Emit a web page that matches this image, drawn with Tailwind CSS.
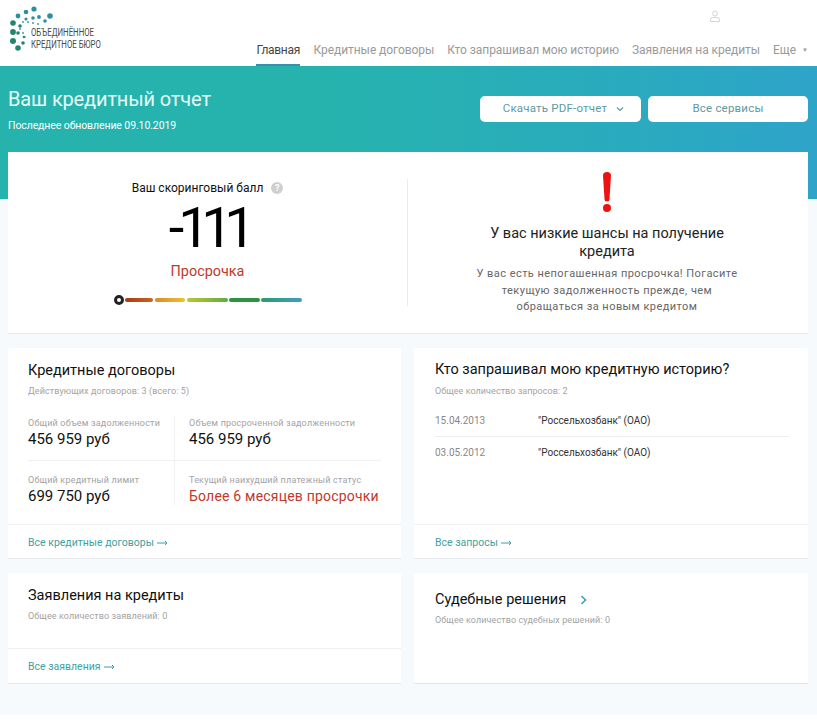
<!DOCTYPE html>
<html lang="ru">
  <head>
    <meta charset="UTF-8" />
    <title>Кредитный отчет</title>
    <script src="https://cdn.jsdelivr.net/npm/@tailwindcss/browser@4"></script>
  </head>
  <body class="bg-white font-['Roboto',sans-serif] text-[#111]">
    <div class="w-[817px] h-[715px] bg-[#f6fafc] overflow-hidden">
      <!-- Header -->
      <header class="h-[66px] bg-white flex justify-between pl-[8px] pr-[9px]">
        <div class="flex items-start pt-[6px]">
          <svg width="48" height="46" viewBox="8 6 48 46" class="shrink-0">
            <g fill="#2f8f9f">
              <circle cx="34" cy="9" r="2.6" /><circle cx="26" cy="12" r="2.3" /><circle cx="50" cy="16" r="2.8" />
              <circle cx="18" cy="16" r="2.4" /><circle cx="33" cy="18" r="1.8" /><circle cx="26" cy="19" r="1.6" />
              <circle cx="39" cy="17" r="1.9" /><circle cx="45" cy="21" r="1.8" />
            </g>
            <g fill="#23856f">
              <circle cx="13" cy="23" r="2.8" /><circle cx="13" cy="32" r="2.9" /><circle cx="13" cy="41" r="3" />
              <circle cx="18" cy="48" r="2.8" /><circle cx="20" cy="26" r="1.8" /><circle cx="18" cy="33" r="1.8" />
              <circle cx="23" cy="43" r="1.8" /><circle cx="24" cy="37" r="1.3" />
            </g>
            <g fill="#3aa39a">
              <circle cx="23" cy="22" r="1" /><circle cx="28" cy="22" r="1" /><circle cx="33" cy="23" r="1" />
              <circle cx="38" cy="24" r="1" /><circle cx="20" cy="29" r="1" /><circle cx="23" cy="33" r="1" />
              <circle cx="25" cy="37" r="0.8" />
            </g>
          </svg>
          <div class="-ml-[25px] mt-[21px] text-[10px] leading-[11.5px] text-[#4a4a4a] origin-left scale-x-[0.78] whitespace-nowrap">
            <div>ОБЪЕДИНЁННОЕ</div>
            <div>КРЕДИТНОЕ БЮРО</div>
          </div>
        </div>
        <div class="flex flex-col items-end">
          <svg width="12" height="12" viewBox="0 0 12 12" fill="none" stroke="#d4d4d4" class="mt-[10px] mr-[87px]">
            <circle cx="6" cy="3.5" r="2.5" /><path d="M1.5 11.5v-2q0-2 2-2h5q2 0 2 2v2z" />
          </svg>
          <nav class="flex gap-[13px] text-[12px] tracking-[-0.05px] text-[#9a9a9a] mt-[11px] h-[33px]">
            <a class="h-full pt-[8px] w-[44px] whitespace-nowrap tracking-[-0.3px] text-[#444] border-b-2 border-[#3a8fb0]">Главная</a>
            <a class="pt-[8px]">Кредитные договоры</a>
            <a class="pt-[8px]">Кто запрашивал мою историю</a>
            <a class="pt-[8px]">Заявления на кредиты</a>
            <a class="pt-[8px] flex items-start gap-[6px]">Еще <span class="text-[6px] mt-[4px]">▼</span></a>
          </nav>
        </div>
      </header>

      <!-- Report banner -->
      <section class="h-[133px] bg-gradient-to-r from-[#26b3ad] from-40% to-[#2ea4c9] flex justify-between px-[8px] pt-[23px]">
        <div>
          <h1 class="text-[20px] leading-[20px] text-[#e4fbf8] tracking-[-0.15px]">Ваш кредитный отчет</h1>
          <p class="text-[10.5px] leading-[14px] text-white mt-[10px] tracking-[-0.1px]">Последнее обновление 09.10.2019</p>
        </div>
        <div class="flex gap-[7px] pr-[1px] pt-[7px] text-[11.5px] tracking-[0.2px] text-[#5f9aa1]">
          <button class="w-[161px] h-[26px] pl-[6px] bg-white rounded-[5px] flex items-center justify-center gap-[9px]">
            Скачать PDF-отчет
            <svg width="8" height="6" viewBox="0 0 8 6" fill="none" stroke="#5f9aa1" stroke-width="1.2"><path d="M1 1.5l3 3 3-3" /></svg>
          </button>
          <button class="w-[160px] h-[26px] bg-white rounded-[5px]">Все сервисы</button>
        </div>
      </section>

      <main class="px-[8px] pr-[9px]">
        <!-- Score card -->
        <section class="-mt-[47px] relative h-[182px] bg-white border-b border-[#e6eaec] flex">
          <div class="w-[399px] pt-[29px] flex flex-col items-center">
            <div class="flex items-center gap-[8px] text-[12px] leading-[14px]">
              Ваш скоринговый балл
              <span class="w-[12px] h-[12px] rounded-full bg-[#cfcfcf] text-white text-[9px] font-bold leading-[12px] text-center">?</span>
            </div>
            <div class="text-[56px] leading-[50px] mt-[8px] tracking-[-8.5px] ml-[1px] text-black"><span class="tracking-[-6px]">-</span>111</div>
            <div class="text-[14.4px] leading-[18px] text-[#c0392b] mt-[10px]">Просрочка</div>
            <div class="flex items-center mt-[14px]">
              <span class="w-[10px] h-[10px] rounded-full bg-white border-[3px] border-[#222] mr-[1px]"></span>
              <span class="w-[28px] h-[4px] rounded-full bg-gradient-to-r from-[#a83c12] to-[#c9641f] mr-[2px]"></span>
              <span class="w-[30px] h-[4px] rounded-full bg-gradient-to-r from-[#d98a2b] to-[#ecc22f] mr-[2px]"></span>
              <span class="w-[41px] h-[4px] rounded-full bg-gradient-to-r from-[#b9c832] to-[#5cab3e] mr-[1px]"></span>
              <span class="w-[31px] h-[4px] rounded-full bg-[#2f9440] mr-[1px]"></span>
              <span class="w-[41px] h-[4px] rounded-full bg-gradient-to-r from-[#2f9a66] to-[#3f9fc4]"></span>
            </div>
          </div>
          <div class="w-px h-[127px] mt-[27px] bg-[#e9ecee]"></div>
          <div class="flex-1 flex flex-col items-center text-center pt-[20px] pr-[2px]">
            <svg width="10" height="42" viewBox="0 0 10 42">
              <path d="M1 3.5a4 3.5 0 0 1 8 0L7.5 27a2.5 2.5 0 0 1-5 0z" fill="#ee1111" />
              <circle cx="5" cy="36" r="4" fill="#ee1111" />
            </svg>
            <h2 class="text-[14.5px] leading-[18px] mt-[11px] text-[#222] w-[260px]">У вас низкие шансы на получение кредита</h2>
            <p class="text-[11px] leading-[16.5px] tracking-[0.45px] text-[#666] mt-[5px] w-[270px]">У вас есть непогашенная просрочка! Погасите текущую задолженность прежде, чем обращаться за новым кредитом</p>
          </div>
        </section>

        <!-- Cards -->
        <div class="grid grid-cols-[393px_394px] gap-x-[13px] gap-y-[14px] mt-[14px]">
          <section class="h-[211px] bg-white border-b border-[#e6eaec] flex flex-col">
            <div class="flex-1 px-[20px] pt-[13px]">
              <h3 class="text-[14.5px] leading-[20px]">Кредитные договоры</h3>
              <p class="text-[9px] leading-[12px] text-[#a3a3a3] mt-[4px] tracking-[0.1px]">Действующих договоров: 3 (всего: 5)</p>
              <div class="grid grid-cols-[147px_1fr] mt-[19px] h-[89px]">
                <div class="border-r border-b border-[#eff1f2] h-[45px] pt-[1px]">
                  <p class="text-[9px] leading-[12px] text-[#a3a3a3] tracking-[0.2px]">Общий объем задолженности</p>
                  <p class="text-[15px] leading-[18px] mt-[1px]">456 959 руб</p>
                </div>
                <div class="pl-[14px] border-b border-[#eff1f2] h-[45px] pt-[1px]">
                  <p class="text-[9px] leading-[12px] text-[#a3a3a3] tracking-[0.2px]">Объем просроченной задолженности</p>
                  <p class="text-[15px] leading-[18px] mt-[1px]">456 959 руб</p>
                </div>
                <div class="border-r border-[#eff1f2] pt-[13px]">
                  <p class="text-[9px] leading-[12px] text-[#a3a3a3] tracking-[0.2px]">Общий кредитный лимит</p>
                  <p class="text-[15px] leading-[18px] mt-[1px]">699 750 руб</p>
                </div>
                <div class="pl-[14px] pt-[13px]">
                  <p class="text-[9px] leading-[12px] text-[#a3a3a3] tracking-[0.2px]">Текущий наихудший платежный статус</p>
                  <p class="text-[14px] leading-[18px] mt-[1px] text-[#c0392b] tracking-[0.2px] whitespace-nowrap">Более 6 месяцев просрочки</p>
                </div>
              </div>
            </div>
            <a class="h-[34px] border-t border-[#eff1f2] px-[20px] pt-[11px] text-[10.5px] leading-[14px] text-[#3f9f9f] flex items-start gap-[3px]">
              Все кредитные договоры
              <svg width="11" height="6" viewBox="0 0 11 6" fill="none" stroke="#3f9f9f" class="mt-[4px]"><path d="M0 3h10M8 1l2 2-2 2" /></svg>
            </a>
          </section>

          <section class="h-[211px] bg-white border-b border-[#e6eaec] flex flex-col">
            <div class="flex-1 px-[21px] pt-[12px]">
              <h3 class="text-[14.5px] leading-[20px]">Кто запрашивал мою кредитную историю?</h3>
              <p class="text-[9px] leading-[12px] text-[#a3a3a3] mt-[5px] tracking-[0.05px]">Общее количество запросов: 2</p>
              <div class="mt-[8px] text-[10px] w-[354px]">
                <div class="flex items-center h-[32px] border-b border-[#eceff0]">
                  <span class="w-[103px] text-[#888]">15.04.2013</span><span class="text-[#333]">"Россельхозбанк" (ОАО)</span>
                </div>
                <div class="flex items-center h-[31px]">
                  <span class="w-[103px] text-[#888]">03.05.2012</span><span class="text-[#333]">"Россельхозбанк" (ОАО)</span>
                </div>
              </div>
            </div>
            <a class="h-[34px] border-t border-[#eff1f2] px-[21px] pt-[11px] text-[10.5px] leading-[14px] text-[#3f9f9f] flex items-start gap-[3px]">
              Все запросы
              <svg width="11" height="6" viewBox="0 0 11 6" fill="none" stroke="#3f9f9f" class="mt-[4px]"><path d="M0 3h10M8 1l2 2-2 2" /></svg>
            </a>
          </section>

          <section class="h-[111px] bg-white border-b border-[#e6eaec] flex flex-col">
            <div class="flex-1 px-[20px] pt-[13px]">
              <h3 class="text-[14.5px] leading-[20px]">Заявления на кредиты</h3>
              <p class="text-[9px] leading-[12px] text-[#a3a3a3] mt-[4px] tracking-[0.1px]">Общее количество заявлений: 0</p>
            </div>
            <a class="h-[35px] border-t border-[#eff1f2] px-[20px] pt-[11px] text-[10.5px] leading-[14px] text-[#3f9f9f] flex items-start gap-[3px]">
              Все заявления
              <svg width="11" height="6" viewBox="0 0 11 6" fill="none" stroke="#3f9f9f" class="mt-[4px]"><path d="M0 3h10M8 1l2 2-2 2" /></svg>
            </a>
          </section>

          <section class="h-[111px] bg-white border-b border-[#dfe5e8] px-[21px] pt-[17px]">
            <div class="flex items-center gap-[14px]">
              <h3 class="text-[14.5px] leading-[20px]">Судебные решения</h3>
              <svg width="7" height="10" viewBox="0 0 7 10" fill="none" stroke="#3fa3ad" stroke-width="1.6"><path d="M1.5 1l4 4-4 4" /></svg>
            </div>
            <p class="text-[9px] leading-[12px] text-[#a3a3a3] mt-[4px] tracking-[0.1px]">Общее количество судебных решений: 0</p>
          </section>
        </div>
      </main>
    </div>
  </body>
</html>
